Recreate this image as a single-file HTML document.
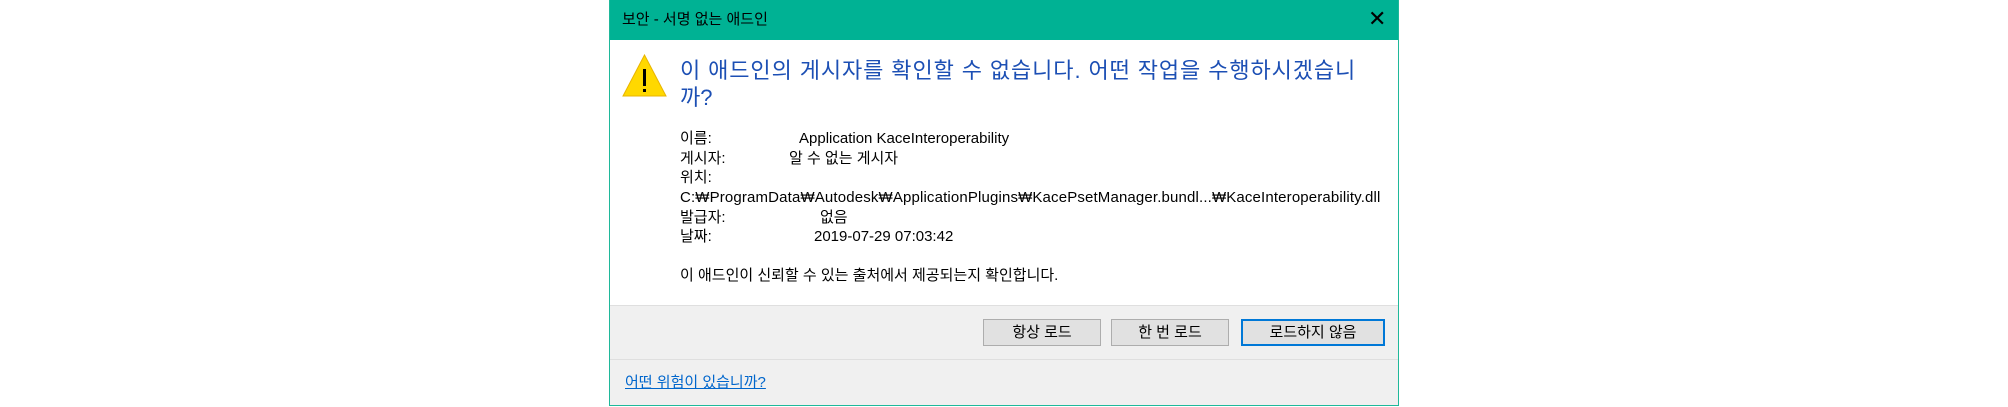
<!DOCTYPE html>
<html><head><meta charset="utf-8"><style>
html,body{margin:0;padding:0;background:#fff;width:2008px;height:407px;overflow:hidden;font-family:"Liberation Sans","Noto Sans CJK KR",sans-serif;}
.dlg{position:absolute;left:609px;top:0;width:788px;height:405px;border:1px solid #1fb89a;border-top:none;background:#fff;}
.title{position:absolute;left:0;top:0;width:788px;height:40px;background:#00b294;}
.title span{position:absolute;left:12px;top:10px;font-size:15px;line-height:20px;color:#000;}
.x{position:absolute;left:758px;top:8px;font-size:22px;line-height:22px;color:#000;font-weight:300;}
.t{position:absolute;white-space:nowrap;line-height:20px;}
.h{font-size:22px;line-height:27px;color:#1c4fb4;left:70px;}
.d{font-size:15px;color:#000;}
.gray{position:absolute;left:0;top:305px;width:788px;height:100px;background:#f0f0f0;}
.sep{position:absolute;left:0;top:305px;width:788px;height:1px;background:#dfdfdf;}
.sep2{position:absolute;left:0;top:359px;width:788px;height:1px;background:#dfdfdf;}
.btn{position:absolute;top:319px;height:25px;background:#e1e1e1;border:1px solid #adadad;font-size:15px;text-align:center;line-height:25px;box-sizing:content-box;}
.def{border:2px solid #0078d7;height:23px;line-height:23px;}
.link{position:absolute;left:15px;top:373px;font-size:15px;line-height:20px;color:#0066cc;text-decoration:underline;}
</style></head><body>
<div class="dlg">
<div class="title"><span>보안 - 서명 없는 애드인</span><div class="x">✕</div></div>
<svg style="position:absolute;left:12px;top:54px" width="45" height="44" viewBox="0 0 45 44"><polygon points="22.5,1 44,42 1,42" fill="#ffd800" stroke="#e8b400" stroke-width="1"/><rect x="21" y="15" width="3" height="17" fill="#000"/><rect x="21" y="35" width="3" height="3" fill="#000"/></svg>
<div class="t h" style="top:57px;letter-spacing:0.9px">이 애드인의 게시자를 확인할 수 없습니다. 어떤 작업을 수행하시겠습니</div>
<div class="t h" style="top:84px">까?</div>
<div class="t d" style="left:70px;top:129px">이름:</div><div class="t d" style="left:189px;top:129px">Application KaceInteroperability</div>
<div class="t d" style="left:70px;top:149px">게시자:</div><div class="t d" style="left:179px;top:149px">알 수 없는 게시자</div>
<div class="t d" style="left:70px;top:168px">위치:</div>
<div class="t d" style="left:70px;top:188px;letter-spacing:0.15px">C:₩ProgramData₩Autodesk₩ApplicationPlugins₩KacePsetManager.bundl...₩KaceInteroperability.dll</div>
<div class="t d" style="left:70px;top:208px">발급자:</div><div class="t d" style="left:210px;top:208px">없음</div>
<div class="t d" style="left:70px;top:227px">날짜:</div><div class="t d" style="left:204px;top:227px">2019-07-29 07:03:42</div>
<div class="t d" style="left:70px;top:266px">이 애드인이 신뢰할 수 있는 출처에서 제공되는지 확인합니다.</div>
<div class="gray"></div><div class="sep"></div><div class="sep2"></div>
<div class="btn" style="left:373px;width:116px">항상 로드</div>
<div class="btn" style="left:501px;width:116px">한 번 로드</div>
<div class="btn def" style="left:631px;width:140px">로드하지 않음</div>
<div class="link">어떤 위험이 있습니까?</div>
</div>
</body></html>
